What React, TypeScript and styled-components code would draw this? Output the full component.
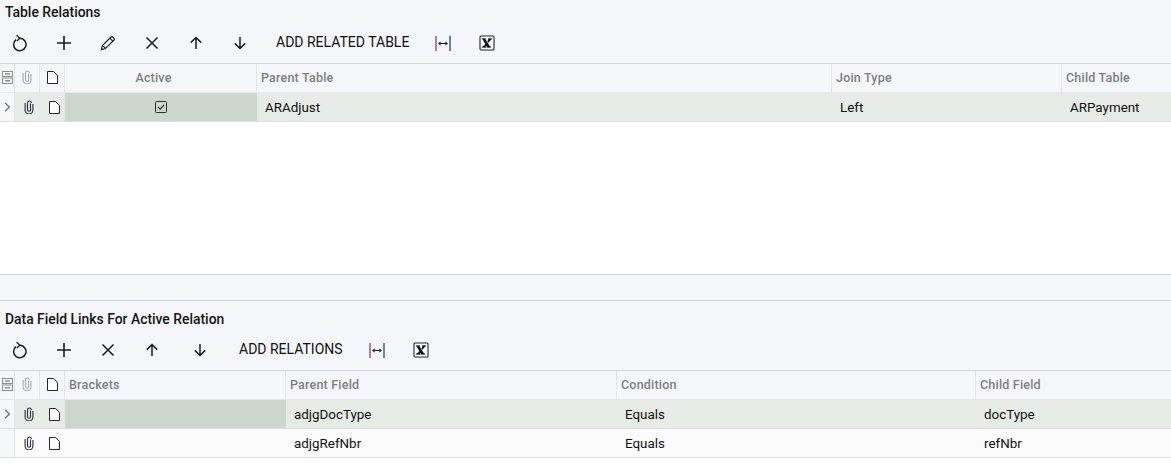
import React from 'react'
import styled, { createGlobalStyle } from 'styled-components';

const GlobalStyle = createGlobalStyle`
    html, body {
        margin: 0;
        padding: 0;
        background: #ffffff;
        font-family: Roboto, "Liberation Sans", Arial, sans-serif;
        color: #000000;
    }
`;

const Page = styled.div`
    width: 1171px;
    height: 476px;
    overflow: hidden;
    display: flex;
    flex-direction: column;
    background: #ffffff;
`;

const Panel = styled.section`
    background: #f5f6f9;
`;

const Title = styled.h2<{ $top: number }>`
    margin: 0;
    padding: ${({ $top }) => $top}px 0 0 5px;
    height: 16px;
    font-size: 13.9px;
    font-weight: 500;
    line-height: 16px;
    color: #141414;
`;

const Toolbar = styled.div`
    display: flex;
    align-items: center;
    height: 40px;
    margin-top: 3px;
    padding: 0 0 0 8px;
`;

const ToolButton = styled.button<{ $after: number }>`
    width: 24px;
    height: 24px;
    margin: 0 ${({ $after }) => $after}px 0 0;
    padding: 0;
    border: 0;
    background: none;
    display: flex;
    align-items: center;
    justify-content: center;
    flex: none;
    svg {
        display: block;
    }
`;

const TextButton = styled.button<{ $after: number }>`
    margin: -2px ${({ $after }) => $after}px 0 0;
    padding: 0;
    border: 0;
    background: none;
    font-family: inherit;
    font-size: 14px;
    line-height: 24px;
    color: #111111;
    white-space: nowrap;
`;

const Grid = styled.div`
    border-top: 1px solid #d4d5d8;
`;

const Row = styled.div<{ $columns: string; $selected?: boolean; $header?: boolean }>`
    display: grid;
    grid-template-columns: ${({ $columns }) => $columns};
    height: 29px;
    box-sizing: border-box;
    background: ${({ $selected, $header }) => ($header ? '#f5f6f9' : $selected ? '#e6ebe5' : '#fbfbfc')};
    border-bottom: 1px solid ${({ $header }) => ($header ? '#e8e9ec' : '#dcdee0')};
`;

const HeadCell = styled.div<{ $center?: boolean; $inset?: number }>`
    display: flex;
    align-items: center;
    justify-content: ${({ $center }) => ($center ? 'center' : 'flex-start')};
    padding: ${({ $center, $inset }) => ($center ? `0 ${$inset ?? 0}px 2px 0` : '0 0 2px 4px')};
    border-right: 1px solid #e2e3e7;
    font-size: 12.5px;
    font-weight: 500;
    letter-spacing: 0.2px;
    color: #7d7e84;
    min-width: 0;
    overflow: hidden;
    white-space: nowrap;
    &:last-child {
        border-right: 0;
    }
`;

const Cell = styled.div`
    display: flex;
    align-items: center;
    padding-left: 8px;
    font-size: 13.4px;
    color: #111111;
    min-width: 0;
    white-space: nowrap;
`;

const IconCell = styled.div<{ $gutter?: boolean; $shift?: number }>`
    display: flex;
    align-items: center;
    justify-content: center;
    padding-left: ${({ $shift }) => $shift ?? 0}px;
    box-sizing: border-box;
    background: ${({ $gutter }) => ($gutter ? '#f5f6f9' : 'transparent')};
    border-right: ${({ $gutter }) => ($gutter ? '1px solid #e4e5e8' : '0')};
`;

const ActiveCell = styled.div`
    display: flex;
    align-items: center;
    justify-content: center;
    background: #ccd6cc;
`;

const Spacer = styled.div`
    height: 152px;
    background: #ffffff;
    border-bottom: 1px solid #d4d5d8;
`;

const Splitter = styled.div`
    height: 25px;
    background: #f5f6f9;
    border-bottom: 1px solid #d4d5d8;
`;

const Stroke = { fill: 'none', stroke: '#1c1c1c', strokeWidth: 1.5 };

const RefreshIcon = () => (
    <svg width="16" height="18" viewBox="0 0 16 18" {...Stroke}>
        <path d="M4 5.6a6.2 6.2 0 1 0 4-1.3" />
        <path d="M4.6 1.2l3.4 3-3.2 2.8" strokeWidth="1.3" />
    </svg>
);

const PlusIcon = () => (
    <svg width="16" height="16" viewBox="0 0 16 16" {...Stroke}>
        <path d="M8 1v14M1 8h14" strokeWidth="1.6" />
    </svg>
);

const PencilIcon = () => (
    <svg width="16" height="16" viewBox="0 0 16 16" {...Stroke} strokeWidth="1.15">
        <path d="M1.4 14.6l1-4 8.6-8.6a1.2 1.2 0 0 1 1.7 0l1.3 1.3a1.2 1.2 0 0 1 0 1.7l-8.6 8.6z" />
        <path d="M2.6 10.4l3 3" />
        <path d="M9.8 3.2l3 3" />
    </svg>
);

const CrossIcon = () => (
    <svg width="14" height="14" viewBox="0 0 14 14" {...Stroke}>
        <path d="M1.5 1.5l11 11M12.5 1.5l-11 11" />
    </svg>
);

const UpIcon = () => (
    <svg width="14" height="14" viewBox="0 0 14 14" {...Stroke}>
        <path d="M7 13V1.5M1.8 6.6L7 1.5l5.2 5.1" />
    </svg>
);

const DownIcon = () => (
    <svg width="14" height="14" viewBox="0 0 14 14" {...Stroke}>
        <path d="M7 1v11.5M1.8 7.4L7 12.5l5.2-5.1" />
    </svg>
);

const FitIcon = () => (
    <svg width="16" height="15" viewBox="0 0 16 15" fill="none">
        <path d="M1 0v15" stroke="#7a2a86" strokeWidth="1.2" />
        <path d="M15 0v15" stroke="#26364a" strokeWidth="1.2" />
        <path d="M4 7.5h8" stroke="#1c1c1c" strokeWidth="1" />
        <path d="M5.6 5.4L3 7.5l2.6 2.1zM10.4 5.4L13 7.5l-2.6 2.1z" fill="#1c1c1c" />
    </svg>
);

const ExcelIcon = () => (
    <svg width="16" height="16" viewBox="0 0 16 16" fill="none">
        <rect x="1" y="1" width="14" height="14" rx="1" stroke="#20203a" strokeWidth="1.1" fill="#ffffff" />
        <g fill="#111111" stroke="#111111" strokeWidth="0.3">
            <path d="M3.2 3.4h3.6l.1.6-.6.2 4.6 7.2.9.2v.9H8.4L3.8 4.4l-.6-.2z" />
            <path d="M9 3.4h3.8v.9l-.7.2-2.6 3-1-1.2 1.2-1.8-.7-.2zM6.8 9l.9 1.3-1.2 1.3.7.2v.7H3.2v-.8l.8-.2z" />
        </g>
    </svg>
);

const ClipIcon = ({ muted }: { muted?: boolean }) => (
    <svg width="10" height="14" viewBox="0 0 10 14" fill="none" stroke={muted ? '#a9a9b4' : '#2c2a44'} strokeWidth="1.1">
        <path d="M6.5 3.6v6.2a1.5 1.5 0 0 1-3 0V2.9a1.9 1.9 0 0 1 3.8 0" />
        <path d="M8.9 4v6a3.9 3.9 0 0 1-7.8 0V3" />
    </svg>
);

const FileIcon = () => (
    <svg width="11" height="13" viewBox="0 0 11 13" fill="#ffffff" stroke="#26203e" strokeWidth="1">
        <path d="M.5.5h6.2l3.8 4v8H.5z" />
    </svg>
);

const StackIcon = () => (
    <svg width="11" height="13" viewBox="0 0 11 13" fill="none" stroke="#8c8d92" strokeWidth="1">
        <rect x=".5" y=".5" width="10" height="5" />
        <rect x=".5" y="7" width="10" height="5.5" />
        <path d="M3 3h5M3 9.7h5" strokeWidth="1.6" />
    </svg>
);

const ChevronIcon = () => (
    <svg width="7" height="10" viewBox="0 0 7 10" fill="none" stroke="#68707a" strokeWidth="1.2">
        <path d="M1 .8L5.4 5 1 9.2" />
    </svg>
);

const CheckIcon = () => (
    <svg width="12" height="12" viewBox="0 0 12 12" fill="none" stroke="#2b2b2b">
        <rect x=".5" y=".5" width="11" height="11" rx="1" />
        <path d="M3 6l2.2 2.2L9.2 3.8" strokeWidth="1.2" />
    </svg>
);

const RowIcons = ({ current }: { current?: boolean }) => (
    <>
        <IconCell $gutter>{current && <ChevronIcon />}</IconCell>
        <IconCell $shift={3}><ClipIcon /></IconCell>
        <IconCell $shift={3}><FileIcon /></IconCell>
    </>
);

const HeadIcons = () => (
    <>
        <HeadCell $center><StackIcon /></HeadCell>
        <HeadCell $center><ClipIcon muted /></HeadCell>
        <HeadCell $center><FileIcon /></HeadCell>
    </>
);

const relationColumns = '15px 25px 25px 192px 575px 230px 1fr';
const linkColumns = '15px 25px 25px 221px 331px 359px 1fr';

function App() {
    return (
        <Page>
            <GlobalStyle />

            <Panel>
                <Title $top={4}>Table Relations</Title>
                <Toolbar>
                    <ToolButton $after={20}><RefreshIcon /></ToolButton>
                    <ToolButton $after={20}><PlusIcon /></ToolButton>
                    <ToolButton $after={20}><PencilIcon /></ToolButton>
                    <ToolButton $after={20}><CrossIcon /></ToolButton>
                    <ToolButton $after={20}><UpIcon /></ToolButton>
                    <ToolButton $after={24}><DownIcon /></ToolButton>
                    <TextButton $after={22}>ADD RELATED TABLE</TextButton>
                    <ToolButton $after={20}><FitIcon /></ToolButton>
                    <ToolButton $after={0}><ExcelIcon /></ToolButton>
                </Toolbar>
                <Grid>
                    <Row $header $columns={relationColumns}>
                        <HeadIcons />
                        <HeadCell $center $inset={14}>Active</HeadCell>
                        <HeadCell>Parent Table</HeadCell>
                        <HeadCell>Join Type</HeadCell>
                        <HeadCell>Child Table</HeadCell>
                    </Row>
                    <Row $selected $columns={relationColumns}>
                        <RowIcons current />
                        <ActiveCell><CheckIcon /></ActiveCell>
                        <Cell>ARAdjust</Cell>
                        <Cell>Left</Cell>
                        <Cell>ARPayment</Cell>
                    </Row>
                </Grid>
            </Panel>

            <Spacer />
            <Splitter />

            <Panel>
                <Title $top={10}>Data Field Links For Active Relation</Title>
                <Toolbar>
                    <ToolButton $after={20}><RefreshIcon /></ToolButton>
                    <ToolButton $after={20}><PlusIcon /></ToolButton>
                    <ToolButton $after={20}><CrossIcon /></ToolButton>
                    <ToolButton $after={24}><UpIcon /></ToolButton>
                    <ToolButton $after={27}><DownIcon /></ToolButton>
                    <TextButton $after={22}>ADD RELATIONS</TextButton>
                    <ToolButton $after={20}><FitIcon /></ToolButton>
                    <ToolButton $after={0}><ExcelIcon /></ToolButton>
                </Toolbar>
                <Grid>
                    <Row $header $columns={linkColumns}>
                        <HeadIcons />
                        <HeadCell>Brackets</HeadCell>
                        <HeadCell>Parent Field</HeadCell>
                        <HeadCell>Condition</HeadCell>
                        <HeadCell>Child Field</HeadCell>
                    </Row>
                    <Row $selected $columns={linkColumns}>
                        <RowIcons current />
                        <ActiveCell />
                        <Cell>adjgDocType</Cell>
                        <Cell>Equals</Cell>
                        <Cell>docType</Cell>
                    </Row>
                    <Row $columns={linkColumns}>
                        <RowIcons />
                        <div />
                        <Cell>adjgRefNbr</Cell>
                        <Cell>Equals</Cell>
                        <Cell>refNbr</Cell>
                    </Row>
                </Grid>
            </Panel>
        </Page>
    )
}

export default App;
